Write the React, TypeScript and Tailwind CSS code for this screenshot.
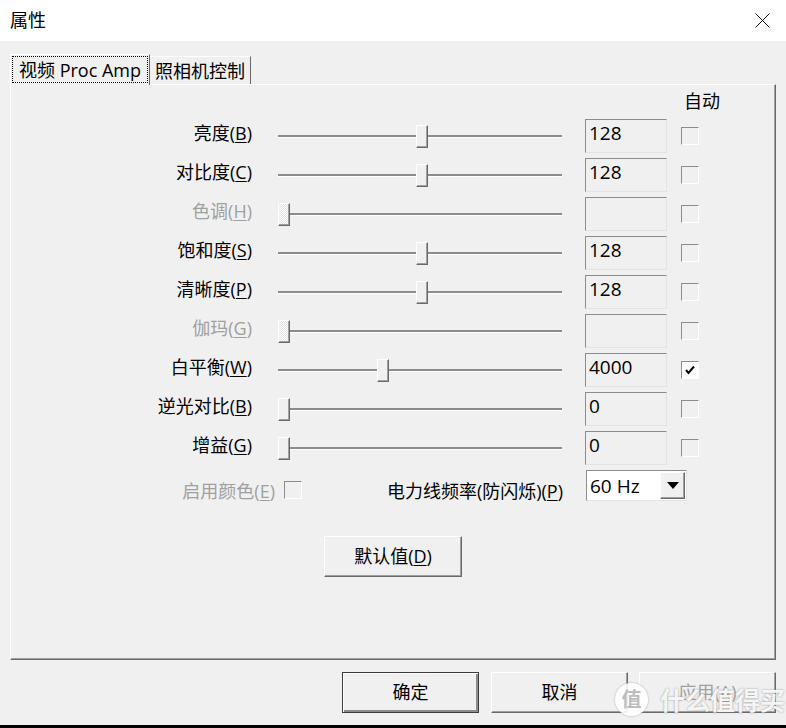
import React from 'react'

const font = "font-['Open_Sans','Noto_Sans_CJK_SC',sans-serif]"

type Row = {
  label: string
  key: string
  pos: number
  value: string
  enabled: boolean
  checked?: boolean
}

const rows: Row[] = [
  { label: '亮度', key: 'B', pos: 138, value: '128', enabled: true },
  { label: '对比度', key: 'C', pos: 138, value: '128', enabled: true },
  { label: '色调', key: 'H', pos: 0, value: '', enabled: false },
  { label: '饱和度', key: 'S', pos: 138, value: '128', enabled: true },
  { label: '清晰度', key: 'P', pos: 138, value: '128', enabled: true },
  { label: '伽玛', key: 'G', pos: 0, value: '', enabled: false },
  { label: '白平衡', key: 'W', pos: 99, value: '4000', enabled: true, checked: true },
  { label: '逆光对比', key: 'B', pos: 0, value: '0', enabled: true },
  { label: '增益', key: 'G', pos: 0, value: '0', enabled: true },
]

function Mnemonic({ text, k }: { text: string; k: string }) {
  return (
    <>
      {text}(<u className="underline-offset-2">{k}</u>)
    </>
  )
}

function Checkbox({ checked }: { checked?: boolean }) {
  return (
    <div
      className={`w-[18px] h-[18px] border border-t-[#8c8c8c] border-l-[#8c8c8c] border-r-white border-b-white flex items-center justify-center ${
        checked ? 'bg-white' : 'bg-[#f0f0f0]'
      }`}
    >
      {checked && (
        <svg width="12" height="12" viewBox="0 0 12 12">
          <path d="M2 6 L4.5 9 L10 2.5" stroke="#000" strokeWidth="2" fill="none" />
        </svg>
      )}
    </div>
  )
}

function Slider({ pos, enabled }: { pos: number; enabled: boolean }) {
  return (
    <div className="relative w-[284px] h-[23px] flex items-center">
      <div className="w-full h-[3px] border-t-2 border-[#8c8c8c] border-b border-b-white" />
      <div
        className={`absolute top-0 w-[12px] h-[23px] border border-t-white border-l-white border-r-[#696969] border-b-[#696969] shadow-[inset_-1px_-1px_#a0a0a0] ${
          enabled
            ? 'bg-[#f0f0f0]'
            : 'bg-[repeating-conic-gradient(#ffffff_0%_25%,#e2e2e2_0%_50%)] bg-[length:2px_2px]'
        }`}
        style={{ left: pos }}
      />
    </div>
  )
}

function SliderRow({ row }: { row: Row }) {
  return (
    <div className="flex items-center h-[34px]">
      <div
        className={`w-[241px] text-right text-[18px] leading-[24px] -mt-[6px] ${
          row.enabled ? 'text-black' : 'text-[#a0a0a0]'
        }`}
      >
        <Mnemonic text={row.label} k={row.key} />
      </div>
      <div className="ml-[26px]">
        <Slider pos={row.pos} enabled={row.enabled} />
      </div>
      <div className="ml-[23px] w-[82px] h-[34px] self-start border border-t-[#8c8c8c] border-l-[#8c8c8c] border-r-[#e3e3e3] border-b-[#e3e3e3] pl-[3px] text-[19px] leading-[26px] text-black">
        {row.value}
      </div>
      <div className="ml-[14px] self-start mt-[8px]">
        <Checkbox checked={row.checked} />
      </div>
    </div>
  )
}

function Button({
  children,
  width,
  isDefault,
  disabled,
}: {
  children: React.ReactNode
  width: string
  isDefault?: boolean
  disabled?: boolean
}) {
  return (
    <div
      className={`${width} h-[41px] flex items-center justify-center text-[18px] bg-[#f0f0f0] ${
        isDefault
          ? 'border border-[#3c3c3c] shadow-[inset_1px_1px_#ffffff,inset_-2px_-2px_#8c8c8c]'
          : 'border border-t-white border-l-white border-r-[#696969] border-b-[#696969] shadow-[inset_-1px_-1px_#a0a0a0]'
      } ${disabled ? 'text-[#a0a0a0]' : 'text-black'}`}
    >
      {children}
    </div>
  )
}

export default function App() {
  return (
    <div className={`w-[786px] h-[728px] bg-[#f0f0f0] flex flex-col overflow-hidden relative ${font}`}>
      <div className="h-[41px] bg-white flex items-center justify-between pl-[10px] pr-[16px] shrink-0">
        <span className="text-[18px] text-black">属性</span>
        <svg width="15" height="15" viewBox="0 0 15 15">
          <path d="M0.5 0.5 L14.5 14.5 M14.5 0.5 L0.5 14.5" stroke="#111" strokeWidth="1" />
        </svg>
      </div>

      <div className="flex-1 flex flex-col px-[10px] pt-[13px]">
        <div className="flex items-end h-[30px]">
          <div className="relative z-10 -mb-px w-[140px] h-[31px] bg-[#f0f0f0] border-t border-l border-white border-r border-r-[#696969] px-[1px] pt-[1px] pb-[2px]">
            <div className="h-full border border-dotted border-black flex items-center justify-center text-[18px] leading-[24px] text-black">
              视频 Proc Amp
            </div>
          </div>
          <div className="w-[101px] h-[28px] border-t border-white border-r border-r-[#696969] flex items-center justify-center text-[18px] leading-[24px] text-black">
            照相机控制
          </div>
        </div>

        <div className="h-[576px] border-l border-t border-white border-r border-b border-r-[#696969] border-b-[#696969] shadow-[inset_-1px_-1px_#a0a0a0] flex flex-col">
          <div className="h-[34px] pl-[673px] pt-[4px] text-[18px] leading-[24px] text-black">自动</div>
          <div className="flex flex-col gap-[5px]">
            {rows.map((r, i) => (
              <SliderRow key={i} row={r} />
            ))}
            <div className="flex items-start h-[31px]">
              <div className="w-[264px] text-right text-[18px] leading-[24px] mt-[9px] text-[#a0a0a0]">
                <Mnemonic text="启用颜色" k="E" />
              </div>
              <div className="ml-[9px] mt-[11px]">
                <Checkbox />
              </div>
              <div className="w-[261px] text-right text-[18px] leading-[24px] mt-[9px] text-black">
                <Mnemonic text="电力线频率(防闪烁)" k="P" />
              </div>
              <div className="ml-[23px] w-[101px] h-[31px] bg-white border border-t-[#8c8c8c] border-l-[#8c8c8c] border-r-[#e3e3e3] border-b-[#e3e3e3] flex items-center justify-between pl-[3px] pr-[1px]">
                <span className="text-[19px] leading-[26px] text-black">60 Hz</span>
                <div className="w-[25px] h-[27px] bg-[#f0f0f0] border border-t-white border-l-white border-r-[#696969] border-b-[#696969] shadow-[inset_-1px_-1px_#a0a0a0] flex items-center justify-center">
                  <svg width="12" height="7" viewBox="0 0 12 7">
                    <path d="M0 0 H12 L6 7 Z" fill="#000" />
                  </svg>
                </div>
              </div>
            </div>
          </div>
          <div className="mt-[35px] ml-[313px]">
            <Button width="w-[138px]">
              <Mnemonic text="默认值" k="D" />
            </Button>
          </div>
        </div>

        <div className="mt-[12px] ml-[332px] flex">
          <Button width="w-[137px]" isDefault>
            确定
          </Button>
          <div className="ml-[12px]">
            <Button width="w-[137px]">取消</Button>
          </div>
          <div className="ml-[11px]">
            <Button width="w-[137px]" disabled>
              <Mnemonic text="应用" k="A" />
            </Button>
          </div>
        </div>
      </div>

      <div className="h-[3px] bg-black shrink-0" />

      <div className="absolute left-[615px] top-[683px] flex items-center gap-[12px] pointer-events-none">
        <div className="w-[33px] h-[33px] rounded-full bg-white/90 shadow-[0_0_2px_#9a9a9a] flex items-center justify-center text-[20px] text-[#bdbdbd] font-bold">
          值
        </div>
        <span className="text-[25px] leading-[30px] text-white/90 [text-shadow:0_0_2px_#8a8a8a] font-bold">
          什么值得买
        </span>
      </div>
    </div>
  )
}
